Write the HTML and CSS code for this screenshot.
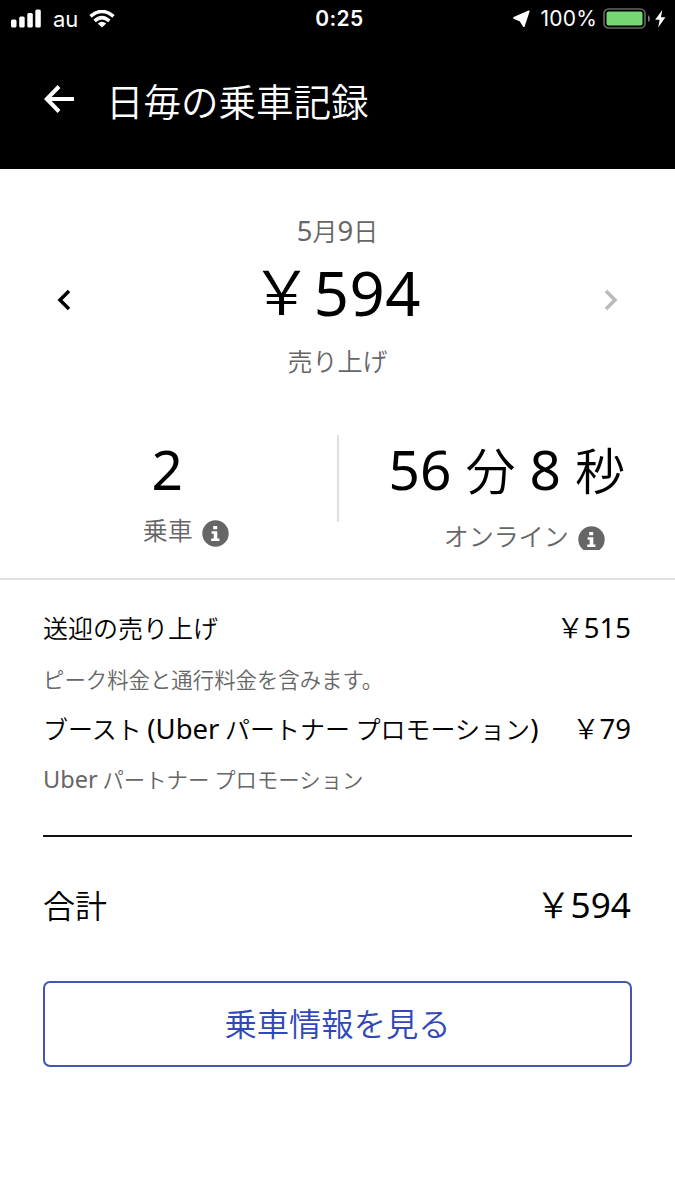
FILE: index.html
```html
<!DOCTYPE html>
<html lang="ja">
<head>
<meta charset="utf-8">
<title>日毎の乗車記録</title>
<link rel="stylesheet" href="styles.css">
</head>
<body>
<header class="header">
  <div class="status">
    <div class="status-left">
      <svg class="signal" width="31" height="19" viewBox="0 0 31 19" fill="#fff"><rect x="0" y="9.500" width="5.500" height="8" rx="1.500"/><rect x="8.200" y="6.500" width="5.500" height="11" rx="1.500"/><rect x="16.300" y="3" width="5.500" height="14.500" rx="1.500"/><rect x="24.300" y="-.5" width="5.500" height="18" rx="1.500"/></svg>
      <span class="carrier">au</span>
      <svg class="wifi" width="26" height="19" viewBox="0 0 26 19"><g fill="none" stroke="#fff" stroke-width="3.500"><path d="M1.500 6.300Q13-3.400 24.500 6.300"/><path d="M5.600 10.900Q13 4.300 20.400 10.900"/></g><path d="M13 17.500L8.800 13.500Q13 10.100 17.200 13.500Z" fill="#fff"/></svg>
    </div>
    <span class="clock">0:25</span>
    <div class="status-right">
      <svg class="locate" width="18" height="18" viewBox="0 0 18 18"><path d="M16.800 1.300L11.800 16.200L8.300 10.600L2 7.900Z" fill="#fff" stroke="#fff" stroke-width="1.700" stroke-linejoin="round"/></svg>
      <span class="percent">100%</span>
      <svg class="battery" width="48" height="22" viewBox="0 0 48 22"><rect x="1" y="1" width="41" height="19" rx="4.500" fill="none" stroke="#62665f" stroke-width="1.700"/><rect x="3.500" y="3.500" width="36" height="14" rx="2" fill="#76d672"/><path d="M45 7q2 1 2 3.500t-2 3.500z" fill="#777"/></svg>
      <svg class="bolt" width="11" height="18" viewBox="0 0 11 18"><path d="M7.200 0L.2 9.700H4.600L3.200 17.600L10.400 7.300H6Z" fill="#fff"/></svg>
    </div>
  </div>
  <div class="titlebar">
    <svg class="back" width="31" height="28" viewBox="0 0 31 28" fill="none" stroke="#fff" stroke-width="4"><path d="M15 1.500L2.800 14L15 26.500M2 14H30"/></svg>
    <h1 class="title">日毎の乗車記録</h1>
  </div>
</header>
<main>
  <section class="summary">
    <svg class="chev" width="14" height="22" viewBox="0 0 14 22" fill="none" stroke="#000" stroke-width="3.500"><path d="M12 2L3 11L12 20"/></svg>
    <div class="earnings">
      <div class="date"><span class="n">5</span>月<span class="n">9</span>日</div>
      <div class="amount"><span class="yen">￥</span><span class="n">594</span></div>
      <div class="caption">売り上げ</div>
    </div>
    <svg class="chev" width="14" height="22" viewBox="0 0 14 22" fill="none" stroke="#bababa" stroke-width="3.500"><path d="M2 2L11 11L2 20"/></svg>
  </section>
  <section class="stats">
    <div class="stat">
      <div class="value"><span class="n">2</span></div>
      <div class="label rides"><span>乗車</span><svg class="info" width="27" height="27" viewBox="0 0 27 27"><circle cx="13.500" cy="13.500" r="13.200" fill="#666"/><path d="M11.200 6h4v3.200h-4zM9.600 11.200h5.700v7.200h2.100v2.500H9.200v-2.500h2.500v-4.700H9.600z" fill="#fff"/></svg></div>
    </div>
    <div class="divider"></div>
    <div class="stat">
      <div class="value"><span class="n">56</span><span class="unit">分</span><span class="n">8</span><span class="unit">秒</span></div>
      <div class="label online"><span>オンライン</span><svg class="info" width="27" height="24" viewBox="0 0 27 24"><circle cx="13.500" cy="13.500" r="13.200" fill="#666"/><path d="M11.200 6h4v3.200h-4zM9.600 11.200h5.700v7.200h2.100v2.500H9.200v-2.500h2.500v-4.700H9.600z" fill="#fff"/></svg></div>
    </div>
  </section>
  <section class="details">
    <div class="row"><span>送迎の売り上げ</span><span><span class="yen">￥</span><span class="n">515</span></span></div>
    <div class="note">ピーク料金と通行料金を含みます。</div>
    <div class="row"><span class="boost">ブースト <span class="n">(Uber</span> パートナー プロモーション<span class="n">)</span></span><span><span class="yen">￥</span><span class="n">79</span></span></div>
    <div class="note promo"><span class="n">Uber</span> パートナー プロモーション</div>
    <div class="total"><span>合計</span><span><span class="yen">￥</span><span class="n">594</span></span></div>
    <button class="button">乗車情報を見る</button>
  </section>
</main>
</body>
</html>
```
FILE: styles.css
```css
* { box-sizing: border-box; }
body {
  margin: 0;
  width: 675px;
  height: 1200px;
  background: #fff;
  color: #000;
  font-family: "Noto Sans CJK JP", sans-serif;
  font-weight: 350;
  white-space: nowrap;
  overflow: hidden;
}
svg { display: block; flex: none; }
.n { font-family: "Noto Sans", sans-serif; font-size: 1.1em; font-weight: 400; }
.yen { font-size: 1.1em; margin-right: -.01em; line-height: 1; }
.header { height: 169px; background: #000; color: #fff; }
.status {
  height: 38px;
  padding: 0 9px 0 11px;
  display: grid;
  grid-template-columns: 1fr auto 1fr;
  align-items: center;
  font-family: Inter, sans-serif;
  font-size: 21px;
  font-weight: 400;
}
.status-left, .status-right { display: flex; align-items: center; }
.status-right { justify-content: flex-end; }
.signal { overflow: visible; }
.carrier { margin: -1px 11px 0 11px; font-size: 22px; }
.clock { font-weight: 600; letter-spacing: .4px; margin: -1px -1px 0 1px; }
.percent { margin: -1px 6px 0 11px; letter-spacing: .2px; }
.bolt { margin-left: 4px; }
.titlebar { display: flex; align-items: center; height: 124px; padding-left: 44px; }
.back { margin-bottom: 3px; }
.title { margin: 0 0 0 31px; font-size: 37.500px; line-height: 50px; font-weight: 350; }
.summary { display: flex; justify-content: space-between; align-items: center; height: 262px; padding: 0 57px; }
.earnings { text-align: center; padding-bottom: 9px; }
.date { height: 35px; line-height: 35px; font-size: 25px; color: #666; }
.amount { height: 95px; line-height: 88px; margin-left: -3px; font-size: 56px; letter-spacing: .6px; }
.amount .yen { margin-right: .01em; vertical-align: .01em; }
.caption { height: 35px; line-height: 35px; font-size: 25px; color: #666; }
.stats { display: flex; height: 149px; padding-top: 4px; border-bottom: 2px solid #e0e0e0; }
.stat { width: 337px; text-align: center; }
.divider { width: 2px; height: 87px; background: #e0e0e0; }
.value { height: 70px; line-height: 67px; font-size: 50px; }
.stat:first-child .value { padding-right: 2px; }
.unit { margin: 0 14px; }
.unit:last-child { margin-right: 0; }
.label { display: flex; justify-content: center; align-items: flex-start; gap: 9px; padding-left: 35px; font-size: 25px; line-height: 37px; color: #666; }
.rides { padding-top: 6px; }
.online { padding-top: 12px; }
.info { margin-top: 9px; }
.details { padding: 27px 43px 0 43px; }
.row { display: flex; justify-content: space-between; height: 40px; line-height: 41px; font-size: 25px; }
.row, .total { padding-right: 1px; }
.note { height: 61px; line-height: 63px; font-size: 21.400px; color: #666; }
.total { display: flex; justify-content: space-between; height: 145px; line-height: 135px; border-top: 2px solid #111; font-size: 32px; }
.promo { height: 55px; line-height: 61px; margin-bottom: 32px; }
.button { display: block; width: 589px; height: 86px; margin-top: .5px; padding: 0 0 3px; border: 2px solid #4354b4; border-radius: 7px; background: #fff; color: #3048b8; font: 350 32.300px "Noto Sans CJK JP", sans-serif; }
```
